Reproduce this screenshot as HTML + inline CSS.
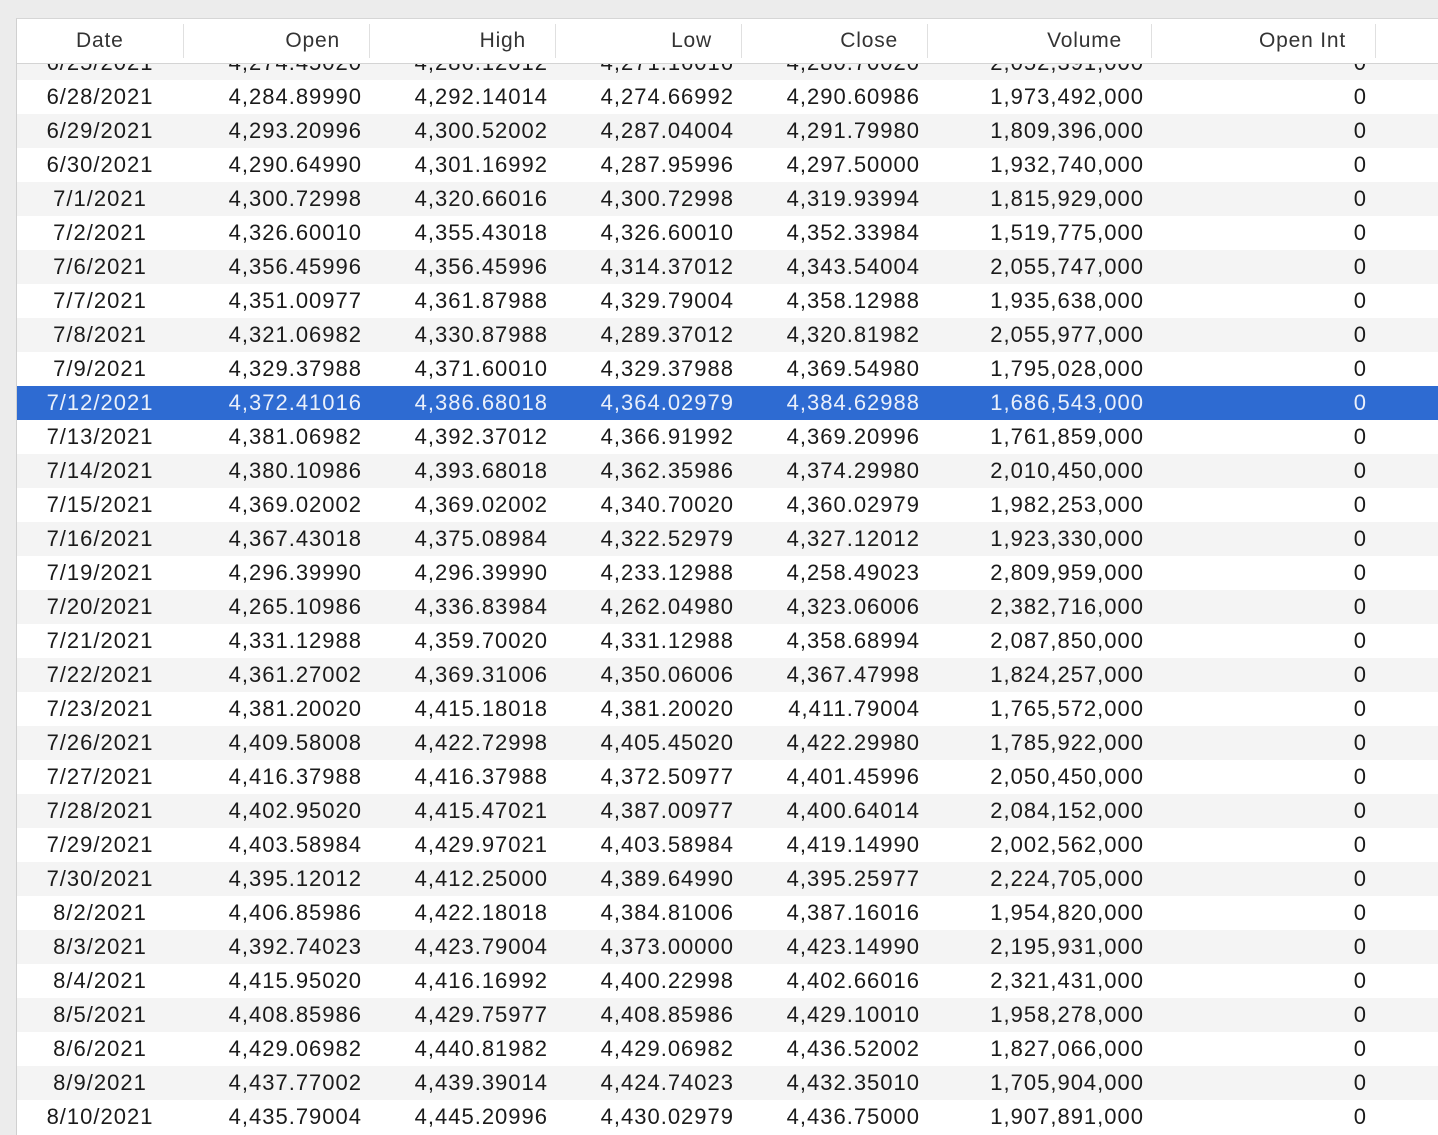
<!DOCTYPE html>
<html><head><meta charset="utf-8"><style>
html,body{margin:0;padding:0;width:1438px;height:1134px;overflow:hidden;background:#ececec;font-family:"Liberation Sans",sans-serif;}
#tbl{position:absolute;left:16px;top:18px;width:1422px;height:1116px;background:#fff;border-left:1px solid #d0d0d0;border-top:1px solid #d6d6d6;overflow:hidden;}
#hdr{position:absolute;left:0;top:0;width:100%;height:44px;background:#fff;border-bottom:1px solid #d4d4d4;z-index:2;}
.h{position:absolute;top:10px;font-size:21px;color:#333;letter-spacing:0.8px;}
.sep{position:absolute;top:5px;width:1px;height:34px;background:#e0e0e0;}
#body{position:absolute;left:0;top:43px;width:100%;height:1073px;overflow:hidden;}
.r{position:absolute;left:0;width:100%;height:34px;display:flex;font-size:22px;color:#1a1a1a;line-height:34px;letter-spacing:1px;}
.r.g{background:#f4f4f4;}
.r.s{background:#2e6bd2;color:#eaf0fb;}
.r span{display:block;text-align:right;box-sizing:border-box;padding-right:7px;}
.r span:nth-child(1){width:166px;text-align:center;padding:0;}
.r span:nth-child(2),.r span:nth-child(3),.r span:nth-child(4),.r span:nth-child(5){width:186px;}
.r span:nth-child(6){width:224px;}
.r span:nth-child(7){width:224px;padding-right:8px;}
</style></head><body>
<div id="tbl">
<div id="hdr">
<div class="h" style="left:59px">Date</div>
<div class="sep" style="left:166px"></div>
<div class="h" style="right:1099px">Open</div>
<div class="sep" style="left:352px"></div>
<div class="h" style="right:913px">High</div>
<div class="sep" style="left:538px"></div>
<div class="h" style="right:727px">Low</div>
<div class="sep" style="left:724px"></div>
<div class="h" style="right:541px">Close</div>
<div class="sep" style="left:910px"></div>
<div class="h" style="right:317px">Volume</div>
<div class="sep" style="left:1134px"></div>
<div class="h" style="right:93px">Open Int</div>
<div class="sep" style="left:1358px"></div>
</div>
<div id="body">
<div class="r g" style="top:-16px"><span>6/25/2021</span><span>4,274.45020</span><span>4,286.12012</span><span>4,271.16016</span><span>4,280.70020</span><span>2,052,391,000</span><span>0</span></div>
<div class="r" style="top:18px"><span>6/28/2021</span><span>4,284.89990</span><span>4,292.14014</span><span>4,274.66992</span><span>4,290.60986</span><span>1,973,492,000</span><span>0</span></div>
<div class="r g" style="top:52px"><span>6/29/2021</span><span>4,293.20996</span><span>4,300.52002</span><span>4,287.04004</span><span>4,291.79980</span><span>1,809,396,000</span><span>0</span></div>
<div class="r" style="top:86px"><span>6/30/2021</span><span>4,290.64990</span><span>4,301.16992</span><span>4,287.95996</span><span>4,297.50000</span><span>1,932,740,000</span><span>0</span></div>
<div class="r g" style="top:120px"><span>7/1/2021</span><span>4,300.72998</span><span>4,320.66016</span><span>4,300.72998</span><span>4,319.93994</span><span>1,815,929,000</span><span>0</span></div>
<div class="r" style="top:154px"><span>7/2/2021</span><span>4,326.60010</span><span>4,355.43018</span><span>4,326.60010</span><span>4,352.33984</span><span>1,519,775,000</span><span>0</span></div>
<div class="r g" style="top:188px"><span>7/6/2021</span><span>4,356.45996</span><span>4,356.45996</span><span>4,314.37012</span><span>4,343.54004</span><span>2,055,747,000</span><span>0</span></div>
<div class="r" style="top:222px"><span>7/7/2021</span><span>4,351.00977</span><span>4,361.87988</span><span>4,329.79004</span><span>4,358.12988</span><span>1,935,638,000</span><span>0</span></div>
<div class="r g" style="top:256px"><span>7/8/2021</span><span>4,321.06982</span><span>4,330.87988</span><span>4,289.37012</span><span>4,320.81982</span><span>2,055,977,000</span><span>0</span></div>
<div class="r" style="top:290px"><span>7/9/2021</span><span>4,329.37988</span><span>4,371.60010</span><span>4,329.37988</span><span>4,369.54980</span><span>1,795,028,000</span><span>0</span></div>
<div class="r s" style="top:324px"><span>7/12/2021</span><span>4,372.41016</span><span>4,386.68018</span><span>4,364.02979</span><span>4,384.62988</span><span>1,686,543,000</span><span>0</span></div>
<div class="r" style="top:358px"><span>7/13/2021</span><span>4,381.06982</span><span>4,392.37012</span><span>4,366.91992</span><span>4,369.20996</span><span>1,761,859,000</span><span>0</span></div>
<div class="r g" style="top:392px"><span>7/14/2021</span><span>4,380.10986</span><span>4,393.68018</span><span>4,362.35986</span><span>4,374.29980</span><span>2,010,450,000</span><span>0</span></div>
<div class="r" style="top:426px"><span>7/15/2021</span><span>4,369.02002</span><span>4,369.02002</span><span>4,340.70020</span><span>4,360.02979</span><span>1,982,253,000</span><span>0</span></div>
<div class="r g" style="top:460px"><span>7/16/2021</span><span>4,367.43018</span><span>4,375.08984</span><span>4,322.52979</span><span>4,327.12012</span><span>1,923,330,000</span><span>0</span></div>
<div class="r" style="top:494px"><span>7/19/2021</span><span>4,296.39990</span><span>4,296.39990</span><span>4,233.12988</span><span>4,258.49023</span><span>2,809,959,000</span><span>0</span></div>
<div class="r g" style="top:528px"><span>7/20/2021</span><span>4,265.10986</span><span>4,336.83984</span><span>4,262.04980</span><span>4,323.06006</span><span>2,382,716,000</span><span>0</span></div>
<div class="r" style="top:562px"><span>7/21/2021</span><span>4,331.12988</span><span>4,359.70020</span><span>4,331.12988</span><span>4,358.68994</span><span>2,087,850,000</span><span>0</span></div>
<div class="r g" style="top:596px"><span>7/22/2021</span><span>4,361.27002</span><span>4,369.31006</span><span>4,350.06006</span><span>4,367.47998</span><span>1,824,257,000</span><span>0</span></div>
<div class="r" style="top:630px"><span>7/23/2021</span><span>4,381.20020</span><span>4,415.18018</span><span>4,381.20020</span><span>4,411.79004</span><span>1,765,572,000</span><span>0</span></div>
<div class="r g" style="top:664px"><span>7/26/2021</span><span>4,409.58008</span><span>4,422.72998</span><span>4,405.45020</span><span>4,422.29980</span><span>1,785,922,000</span><span>0</span></div>
<div class="r" style="top:698px"><span>7/27/2021</span><span>4,416.37988</span><span>4,416.37988</span><span>4,372.50977</span><span>4,401.45996</span><span>2,050,450,000</span><span>0</span></div>
<div class="r g" style="top:732px"><span>7/28/2021</span><span>4,402.95020</span><span>4,415.47021</span><span>4,387.00977</span><span>4,400.64014</span><span>2,084,152,000</span><span>0</span></div>
<div class="r" style="top:766px"><span>7/29/2021</span><span>4,403.58984</span><span>4,429.97021</span><span>4,403.58984</span><span>4,419.14990</span><span>2,002,562,000</span><span>0</span></div>
<div class="r g" style="top:800px"><span>7/30/2021</span><span>4,395.12012</span><span>4,412.25000</span><span>4,389.64990</span><span>4,395.25977</span><span>2,224,705,000</span><span>0</span></div>
<div class="r" style="top:834px"><span>8/2/2021</span><span>4,406.85986</span><span>4,422.18018</span><span>4,384.81006</span><span>4,387.16016</span><span>1,954,820,000</span><span>0</span></div>
<div class="r g" style="top:868px"><span>8/3/2021</span><span>4,392.74023</span><span>4,423.79004</span><span>4,373.00000</span><span>4,423.14990</span><span>2,195,931,000</span><span>0</span></div>
<div class="r" style="top:902px"><span>8/4/2021</span><span>4,415.95020</span><span>4,416.16992</span><span>4,400.22998</span><span>4,402.66016</span><span>2,321,431,000</span><span>0</span></div>
<div class="r g" style="top:936px"><span>8/5/2021</span><span>4,408.85986</span><span>4,429.75977</span><span>4,408.85986</span><span>4,429.10010</span><span>1,958,278,000</span><span>0</span></div>
<div class="r" style="top:970px"><span>8/6/2021</span><span>4,429.06982</span><span>4,440.81982</span><span>4,429.06982</span><span>4,436.52002</span><span>1,827,066,000</span><span>0</span></div>
<div class="r g" style="top:1004px"><span>8/9/2021</span><span>4,437.77002</span><span>4,439.39014</span><span>4,424.74023</span><span>4,432.35010</span><span>1,705,904,000</span><span>0</span></div>
<div class="r" style="top:1038px"><span>8/10/2021</span><span>4,435.79004</span><span>4,445.20996</span><span>4,430.02979</span><span>4,436.75000</span><span>1,907,891,000</span><span>0</span></div>
</div>
</div>
</body></html>
